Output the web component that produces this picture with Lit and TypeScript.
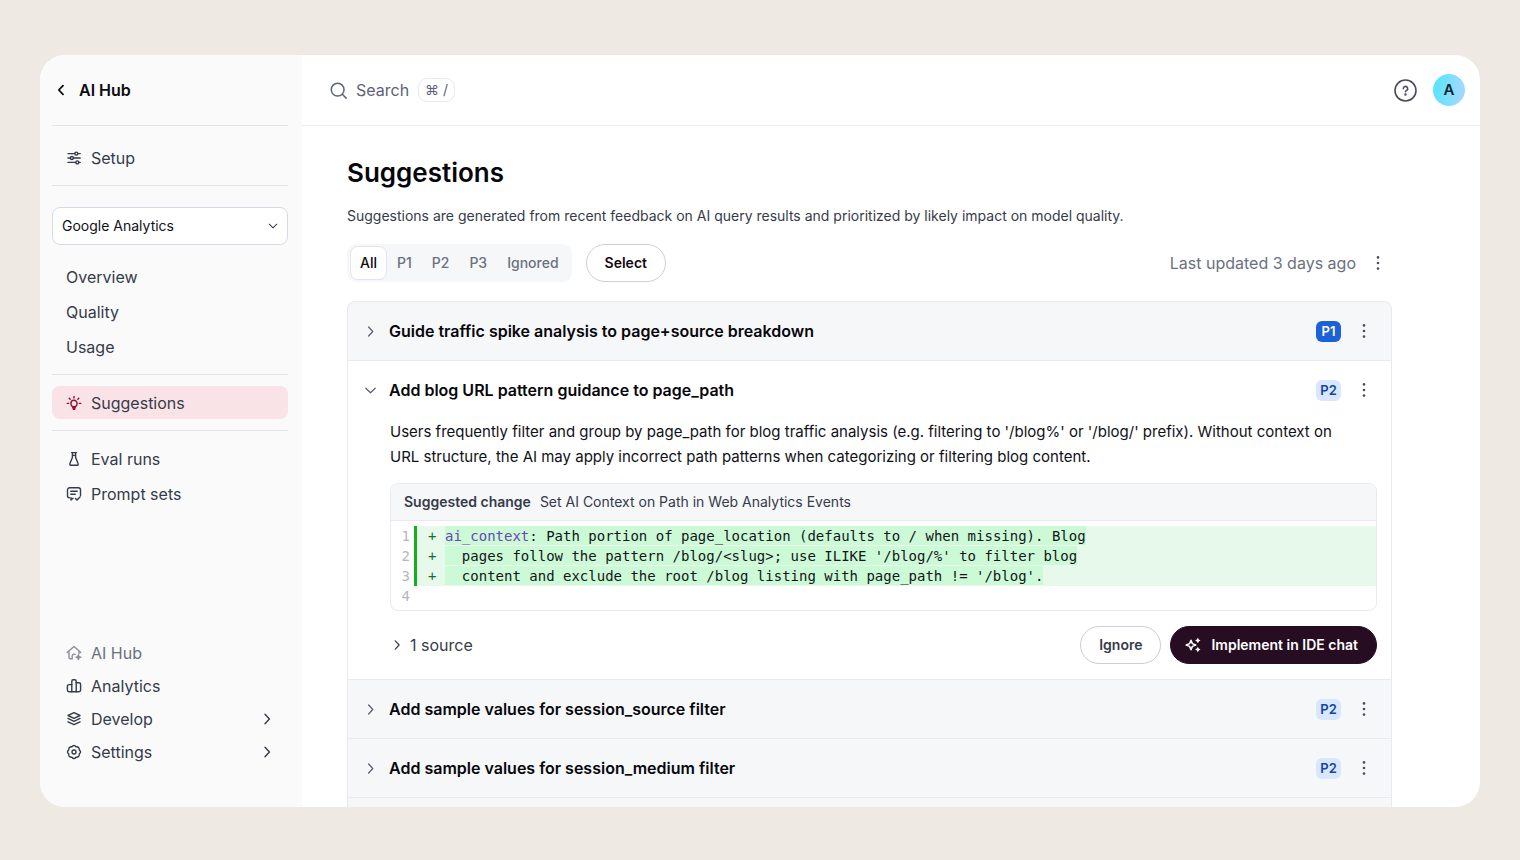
import { LitElement, html, css, svg, nothing } from "lit";
import { customElement, property, state } from "lit/decorators.js";
import { classMap } from "lit/directives/class-map.js";

const glyphs = {
  left: svg`<path d="M10 3.6 5.8 8 10 12.4"/>`,
  right: svg`<path d="M6 3.2 10.4 8 6 12.8"/>`,
  down: svg`<path d="M3 5.6 8 10.4 13 5.6"/>`,
  search: svg`<circle cx="7.2" cy="7.2" r="6"/><path d="m11.6 11.6 3.6 3.6"/>`,
  sliders: svg`<path d="M2 3.6h6.6M12 3.6h2.2M2 8h2.2M7.6 8h6.6M2 12.4h7.6M13 12.4h1.2"/><circle cx="10.3" cy="3.6" r="1.5"/><circle cx="5.9" cy="8" r="1.5"/><circle cx="11.3" cy="12.4" r="1.5"/>`,
  bulb: svg`<path d="M6.6 11.6C5.4 10.8 4.9 9.7 4.9 8.4a3.1 3.1 0 0 1 6.2 0c0 1.3-.5 2.4-1.7 3.2z"/><path fill="currentColor" d="M6.8 12.2h2.4L8.6 14.4H7.4z"/><path d="M8 1.4v1.6M3.2 3.2l1 1M12.8 3.2l-1 1M1.2 8.4h1.5M13.3 8.4h1.5"/>`,
  flask: svg`<path d="M5.6 1.6h4.8M6.4 1.8v4.6L3.9 12.6a1.2 1.2 0 0 0 1.1 1.7h6a1.2 1.2 0 0 0 1.1-1.7L9.6 6.4V1.8M6.4 4.4h3.2"/>`,
  prompt: svg`<path d="M3.4 11.8A2 2 0 0 1 1.5 9.8V4a2.2 2.2 0 0 1 2.2-2.2h8.6A2.2 2.2 0 0 1 14.5 4v5.8"/><path d="M4.8 5.2h6.4M4.8 8.2h4.4"/><path d="M5 11.6v2.4l2-1.7M9.4 12.4l1.6 1.7 3-3.2"/>`,
  house: svg`<path d="M3 7v5.4A1.4 1.4 0 0 0 4.4 13.8h1.8v-2.6a2 2 0 0 1 3-1.8M1.2 7.6 8 1.6l6.8 6M13 7v1.4"/><path fill="currentColor" d="m12.4 9.8.6 1.8 1.8.6-1.8.6-.6 1.8-.6-1.8-1.8-.6 1.8-.6z"/>`,
  bars: svg`<path d="M5.8 6.6H3A1.6 1.6 0 0 0 1.4 8.2v3.9A1.6 1.6 0 0 0 3 13.7h10a1.6 1.6 0 0 0 1.6-1.6V6.4A1.6 1.6 0 0 0 13 4.8h-2.8"/><path d="M5.8 13.7V3.2A1.4 1.4 0 0 1 7.2 1.8h1.6a1.4 1.4 0 0 1 1.4 1.4v10.5"/>`,
  layers: svg`<path d="M8 1.6 14 4.5 8 7.4 2 4.5z"/><path d="m2 7.4 6 2.9 6-2.9M2 10.8l6 2.9 6-2.9"/>`,
  gear: svg`<path d="M13.2 5.9Q15.8 8 13.2 10.1 13.5 13.5 10.1 13.2 8 15.8 5.9 13.2 2.5 13.5 2.8 10.1.2 8 2.8 5.9 2.5 2.5 5.9 2.8 8 .2 10.1 2.8 13.5 2.5 13.2 5.9z"/><circle cx="8" cy="8" r="2"/>`,
  help: svg`<circle cx="8" cy="8" r="7.3"/><path d="M6.5 6.7a1.5 1.5 0 1 1 2.3 1.2c-.5.3-.8.5-.8 1"/><circle cx="8" cy="10.8" r=".35"/>`,
  dots: svg`<g fill="currentColor" stroke="none"><circle cx="8" cy="2.4" r="1.3"/><circle cx="8" cy="8" r="1.3"/><circle cx="8" cy="13.6" r="1.3"/></g>`,
  sparkles: svg`<path d="M6 3.2 7.4 6.6 10.8 8 7.4 9.4 6 12.8 4.6 9.4 1.2 8 4.6 6.6z"/><path fill="currentColor" stroke="none" d="m12.8.8 1 1.7 1.7 1-1.7 1-1 1.7-1-1.7-1.7-1 1.7-1zM12.8 9.8l1 1.7 1.7 1-1.7 1-1 1.7-1-1.7-1.7-1 1.7-1z"/>`,
};
type Glyph = keyof typeof glyphs;

@customElement("ui-icon")
class UiIcon extends LitElement {
  @property() name: Glyph = "right";
  static styles = css`
    :host { display: inline-flex; flex: none; width: 16px; height: 16px; }
    svg {
      width: 100%; height: 100%; fill: none; stroke: currentColor;
      stroke-width: var(--stroke, 1.4); stroke-linecap: round; stroke-linejoin: round;
    }
  `;
  render() {
    return html`<svg viewBox="0 0 16 16" aria-hidden="true">${glyphs[this.name]}</svg>`;
  }
}

interface Suggestion {
  title: string;
  priority: "P1" | "P2" | "P3";
  body?: string;
  target?: string;
  lines?: { key?: string; text: string }[];
}

const suggestions: Suggestion[] = [
  { title: "Guide traffic spike analysis to page+source breakdown", priority: "P1" },
  {
    title: "Add blog URL pattern guidance to page_path",
    priority: "P2",
    body: "Users frequently filter and group by page_path for blog traffic analysis (e.g. filtering to '/blog%' or '/blog/' prefix). Without context on URL structure, the AI may apply incorrect path patterns when categorizing or filtering blog content.",
    target: "Set AI Context on Path in Web Analytics Events",
    lines: [
      { key: "ai_context", text: ": Path portion of page_location (defaults to / when missing). Blog" },
      { text: "  pages follow the pattern /blog/<slug>; use ILIKE '/blog/%' to filter blog" },
      { text: "  content and exclude the root /blog listing with page_path != '/blog'." },
    ],
  },
  { title: "Add sample values for session_source filter", priority: "P2" },
  { title: "Add sample values for session_medium filter", priority: "P2" },
];

const filters = ["All", "P1", "P2", "P3", "Ignored"];

@customElement("app-root")
class AppRoot extends LitElement {
  @state() private filter = "All";
  @state() private open = 1;

  static styles = css`
    :host {
      display: block; box-sizing: border-box; height: 100vh; padding: 55px 40px 53px;
      background: #eee9e2; color: #363b49;
      font: 16px/24px Inter, "Liberation Sans", sans-serif;
    }
    *, *::before { box-sizing: border-box; }
    h1, h2, p { margin: 0; }
    a { color: inherit; text-decoration: none; }
    button, select, input { font: inherit; color: inherit; margin: 0; padding: 0; border: 0; background: none; }
    button { cursor: pointer; }

    .window { display: flex; height: 100%; overflow: hidden; border-radius: 25px; background: #fff; }

    .sidebar { display: flex; flex: none; flex-direction: column; width: 262px; padding: 0 14px 39px 12px; background: #fafafb; }
    .back { display: flex; align-items: center; gap: 10px; height: 70px; padding-left: 1px; color: #0b0b10; font-weight: 600; --stroke: 1.8; }
    .rule { width: 100%; height: 1px; margin: 0; border: 0; background: #e3e4ec; }
    .group { display: flex; flex-direction: column; padding: 10px 0; }
    .group.first { padding-top: 14px; }
    .item { display: flex; align-items: center; gap: 9px; height: 35px; padding: 0 13px 0 14px; border-radius: 8px; }
    .item.active { height: 33px; background: #f9e3e6; }
    .item.active ui-icon { color: #8c1237; }
    .group.current { padding: 11px 0; }
    .muted { color: #6b7080; }
    .muted ui-icon { color: #8d8f96; }
    .grow { flex: 1; }
    .group.bottom { margin-top: auto; padding: 0; }
    .bottom .item { height: 33px; }

    .picker { display: grid; align-items: center; margin-top: 21px; }
    .picker > * { grid-area: 1 / 1; }
    .picker select {
      appearance: none; height: 38px; padding: 0 32px 0 9px; border: 1px solid #d6dae4; border-radius: 8px;
      background: #fff; color: #0f1117; font-size: 14px; outline-offset: 1px;
    }
    .picker ui-icon { justify-self: end; width: 12px; height: 12px; margin-right: 9px; pointer-events: none; }

    .page { display: flex; flex: 1; flex-direction: column; min-width: 0; }
    .topbar { display: flex; flex: none; align-items: center; gap: 16px; height: 71px; padding: 0 15px 0 28px; border-bottom: 1px solid #ececf0; }
    .search { display: flex; flex: 1; align-items: center; gap: 9px; color: #5d6275; }
    .search ui-icon { width: 17px; height: 17px; }
    .search input { field-sizing: content; min-width: 50px; outline: none; }
    .search input::placeholder { color: #5d6275; opacity: 1; }
    kbd { height: 24px; padding: 0 6px; border: 1px solid #e8e9ed; border-radius: 9px; font: 14px/22px Inter, "DejaVu Sans", sans-serif; }
    .help { display: flex; color: #4d4a5e; --stroke: 1.1; }
    .help ui-icon { width: 23px; height: 23px; }
    .avatar { width: 32px; height: 32px; border-radius: 50%; background: linear-gradient(100deg, #62e3fd 20%, #a5d8ff 90%); color: #10222c; font-size: 15px; font-weight: 600; }

    main { display: flex; flex: 1; flex-direction: column; min-height: 0; overflow: hidden; padding: 30px 88px 0 45px; }
    h1 { color: #07070b; font-size: 26px; line-height: 34px; font-weight: 600; }
    .lead { margin-top: 16px; font-size: 14px; line-height: 20px; }
    .toolbar { display: flex; align-items: center; gap: 14px; margin: 18px 0 19px; color: #6b7080; }
    .filters { display: flex; align-items: center; height: 38px; padding: 3px; border-radius: 9px; background: #f5f7f9; }
    .filters button { height: 34px; padding: 0 9px; border: 1px solid transparent; border-radius: 8px; font-size: 14px; font-weight: 500; }
    .filters .on { border-color: #e2e5ee; background: #fff; color: #0b0b10; }
    .pill {
      display: inline-flex; align-items: center; gap: 10px; height: 38px; padding: 0 18px;
      border: 1px solid #cdced8; border-radius: 19px; font-size: 14px; font-weight: 600;
    }
    .pill.strong { color: #150812; }
    .pill.primary { border-color: #260d22; background: #260d22; color: #fff; padding-left: 14px; --stroke: 1.5; }
    .updated { display: flex; align-items: center; gap: 10px; margin-left: auto; padding-right: 2px; }
    .more { display: flex; justify-content: center; width: 24px; color: #4b4f61; }

    .list { flex: 1 0 auto; border: 1px solid #e8eaee; border-bottom: 0; border-radius: 8px 8px 0 0; overflow: hidden; background: #f5f7f9; }
    .entry { border-bottom: 1px solid #e8eaee; }
    .entry.open { background: #fff; }
    .head { display: flex; align-items: center; gap: 11px; height: 58px; padding: 0 15px; }
    .head h2 { flex: 1; font: inherit; }
    .toggle { display: flex; align-items: center; gap: 11px; width: 100%; color: #07070b; font-weight: 600; text-align: left; }
    .toggle ui-icon { color: #5d6275; width: 15px; height: 15px; }
    .badge { min-width: 25px; border-radius: 6px; background: #d8e7fd; color: #1146a4; font-size: 13px; line-height: 21px; font-weight: 600; text-align: center; }
    .badge.top { background: #1b62d8; color: #fff; }
    .detail { padding: 0 14px 15px 42px; }
    .detail p { padding-right: 16px; color: #0f1117; font-size: 15px; line-height: 25px; }

    .change { margin-top: 14px; border: 1px solid #e8eaee; border-radius: 8px; overflow: hidden; }
    .caption { display: flex; gap: 9px; padding: 8px 13px; border-bottom: 1px solid #e8eaee; background: #f5f7f9; font-size: 14px; line-height: 20px; }
    .caption b { font-weight: 600; }
    .code { padding: 5px 0 4px; color: #12161a; font: 14px/20px "DejaVu Sans Mono", "Liberation Mono", monospace; }
    .line { display: grid; grid-template-columns: 23px 1fr; }
    .num { padding-right: 4px; color: #b4b7bb; text-align: right; }
    .added { display: flex; padding-left: 11px; border-left: 3px solid #14b01c; background: #e7f9ea; white-space: pre; }
    .plus { width: 17px; color: #14702c; }
    .mark { height: 19px; background: #ccfad6; }
    .key { color: #6a45bd; }

    .actions { display: flex; align-items: center; gap: 9px; margin-top: 15px; }
    .source { display: flex; align-items: center; gap: 6px; margin-right: auto; }
    .source ui-icon { width: 14px; height: 14px; }
  `;

  private link(label: string, icon?: Glyph, cls = "", nested = false) {
    return html`<a href="#" class="item ${cls}">
      ${icon ? html`<ui-icon name=${icon}></ui-icon>` : nothing}
      <span class="grow">${label}</span>
      ${nested ? html`<ui-icon name="right"></ui-icon>` : nothing}
    </a>`;
  }

  private entry(s: Suggestion, i: number) {
    const open = this.open === i;
    return html`<article class=${classMap({ entry: true, open })}>
      <div class="head">
        <h2>
          <button class="toggle" aria-expanded=${open} @click=${() => (this.open = open ? -1 : i)}>
            <ui-icon name=${open ? "down" : "right"}></ui-icon>${s.title}
          </button>
        </h2>
        <span class=${classMap({ badge: true, top: s.priority === "P1" })}>${s.priority}</span>
        <button class="more" aria-label="More actions"><ui-icon name="dots"></ui-icon></button>
      </div>
      ${open && s.body ? this.detail(s) : nothing}
    </article>`;
  }

  private detail(s: Suggestion) {
    const lines = s.lines ?? [];
    return html`<div class="detail">
      <p>${s.body}</p>
      <div class="change">
        <div class="caption"><b>Suggested change</b><span>${s.target}</span></div>
        <div class="code">
          ${lines.map(
            (l, n) => html`<div class="line"><span class="num">${n + 1}</span><div class="added"><span class="plus">+</span><span class="mark">${l.key ? html`<span class="key">${l.key}</span>` : nothing}${l.text}</span></div></div>`
          )}
          <div class="line"><span class="num">${lines.length + 1}</span></div>
        </div>
      </div>
      <div class="actions">
        <button class="source" aria-expanded="false"><ui-icon name="right"></ui-icon>1 source</button>
        <button class="pill">Ignore</button>
        <button class="pill primary"><ui-icon name="sparkles"></ui-icon>Implement in IDE chat</button>
      </div>
    </div>`;
  }

  render() {
    const shown = suggestions
      .map((s, i) => ({ s, i }))
      .filter(({ s }) => this.filter === "All" || s.priority === this.filter);
    return html`<div class="window">
      <nav class="sidebar" aria-label="Main">
        <a href="#" class="back"><ui-icon name="left"></ui-icon>AI Hub</a>
        <hr class="rule" />
        <div class="group first">${this.link("Setup", "sliders")}</div>
        <hr class="rule" />
        <div class="picker">
          <select aria-label="Model"><option>Google Analytics</option></select>
          <ui-icon name="down"></ui-icon>
        </div>
        <div class="group first">
          ${this.link("Overview")}${this.link("Quality")}${this.link("Usage")}
        </div>
        <hr class="rule" />
        <div class="group current">${this.link("Suggestions", "bulb", "active")}</div>
        <hr class="rule" />
        <div class="group">${this.link("Eval runs", "flask")}${this.link("Prompt sets", "prompt")}</div>
        <div class="group bottom">
          ${this.link("AI Hub", "house", "muted")}${this.link("Analytics", "bars")}
          ${this.link("Develop", "layers", "", true)}${this.link("Settings", "gear", "", true)}
        </div>
      </nav>
      <div class="page">
        <header class="topbar">
          <label class="search">
            <ui-icon name="search"></ui-icon>
            <input type="text" placeholder="Search" aria-label="Search" />
            <kbd>⌘ /</kbd>
          </label>
          <button class="help" aria-label="Help"><ui-icon name="help"></ui-icon></button>
          <button class="avatar" aria-label="Account">A</button>
        </header>
        <main>
          <h1>Suggestions</h1>
          <p class="lead">Suggestions are generated from recent feedback on AI query results and prioritized by likely impact on model quality.</p>
          <div class="toolbar">
            <div class="filters" role="group" aria-label="Priority">
              ${filters.map(
                (f) => html`<button class=${classMap({ on: f === this.filter })} aria-pressed=${f === this.filter} @click=${() => (this.filter = f)}>${f}</button>`
              )}
            </div>
            <button class="pill strong">Select</button>
            <div class="updated">
              <span>Last updated 3 days ago</span>
              <button class="more" aria-label="List options"><ui-icon name="dots"></ui-icon></button>
            </div>
          </div>
          <section class="list">${shown.map(({ s, i }) => this.entry(s, i))}</section>
        </main>
      </div>
    </div>`;
  }
}
